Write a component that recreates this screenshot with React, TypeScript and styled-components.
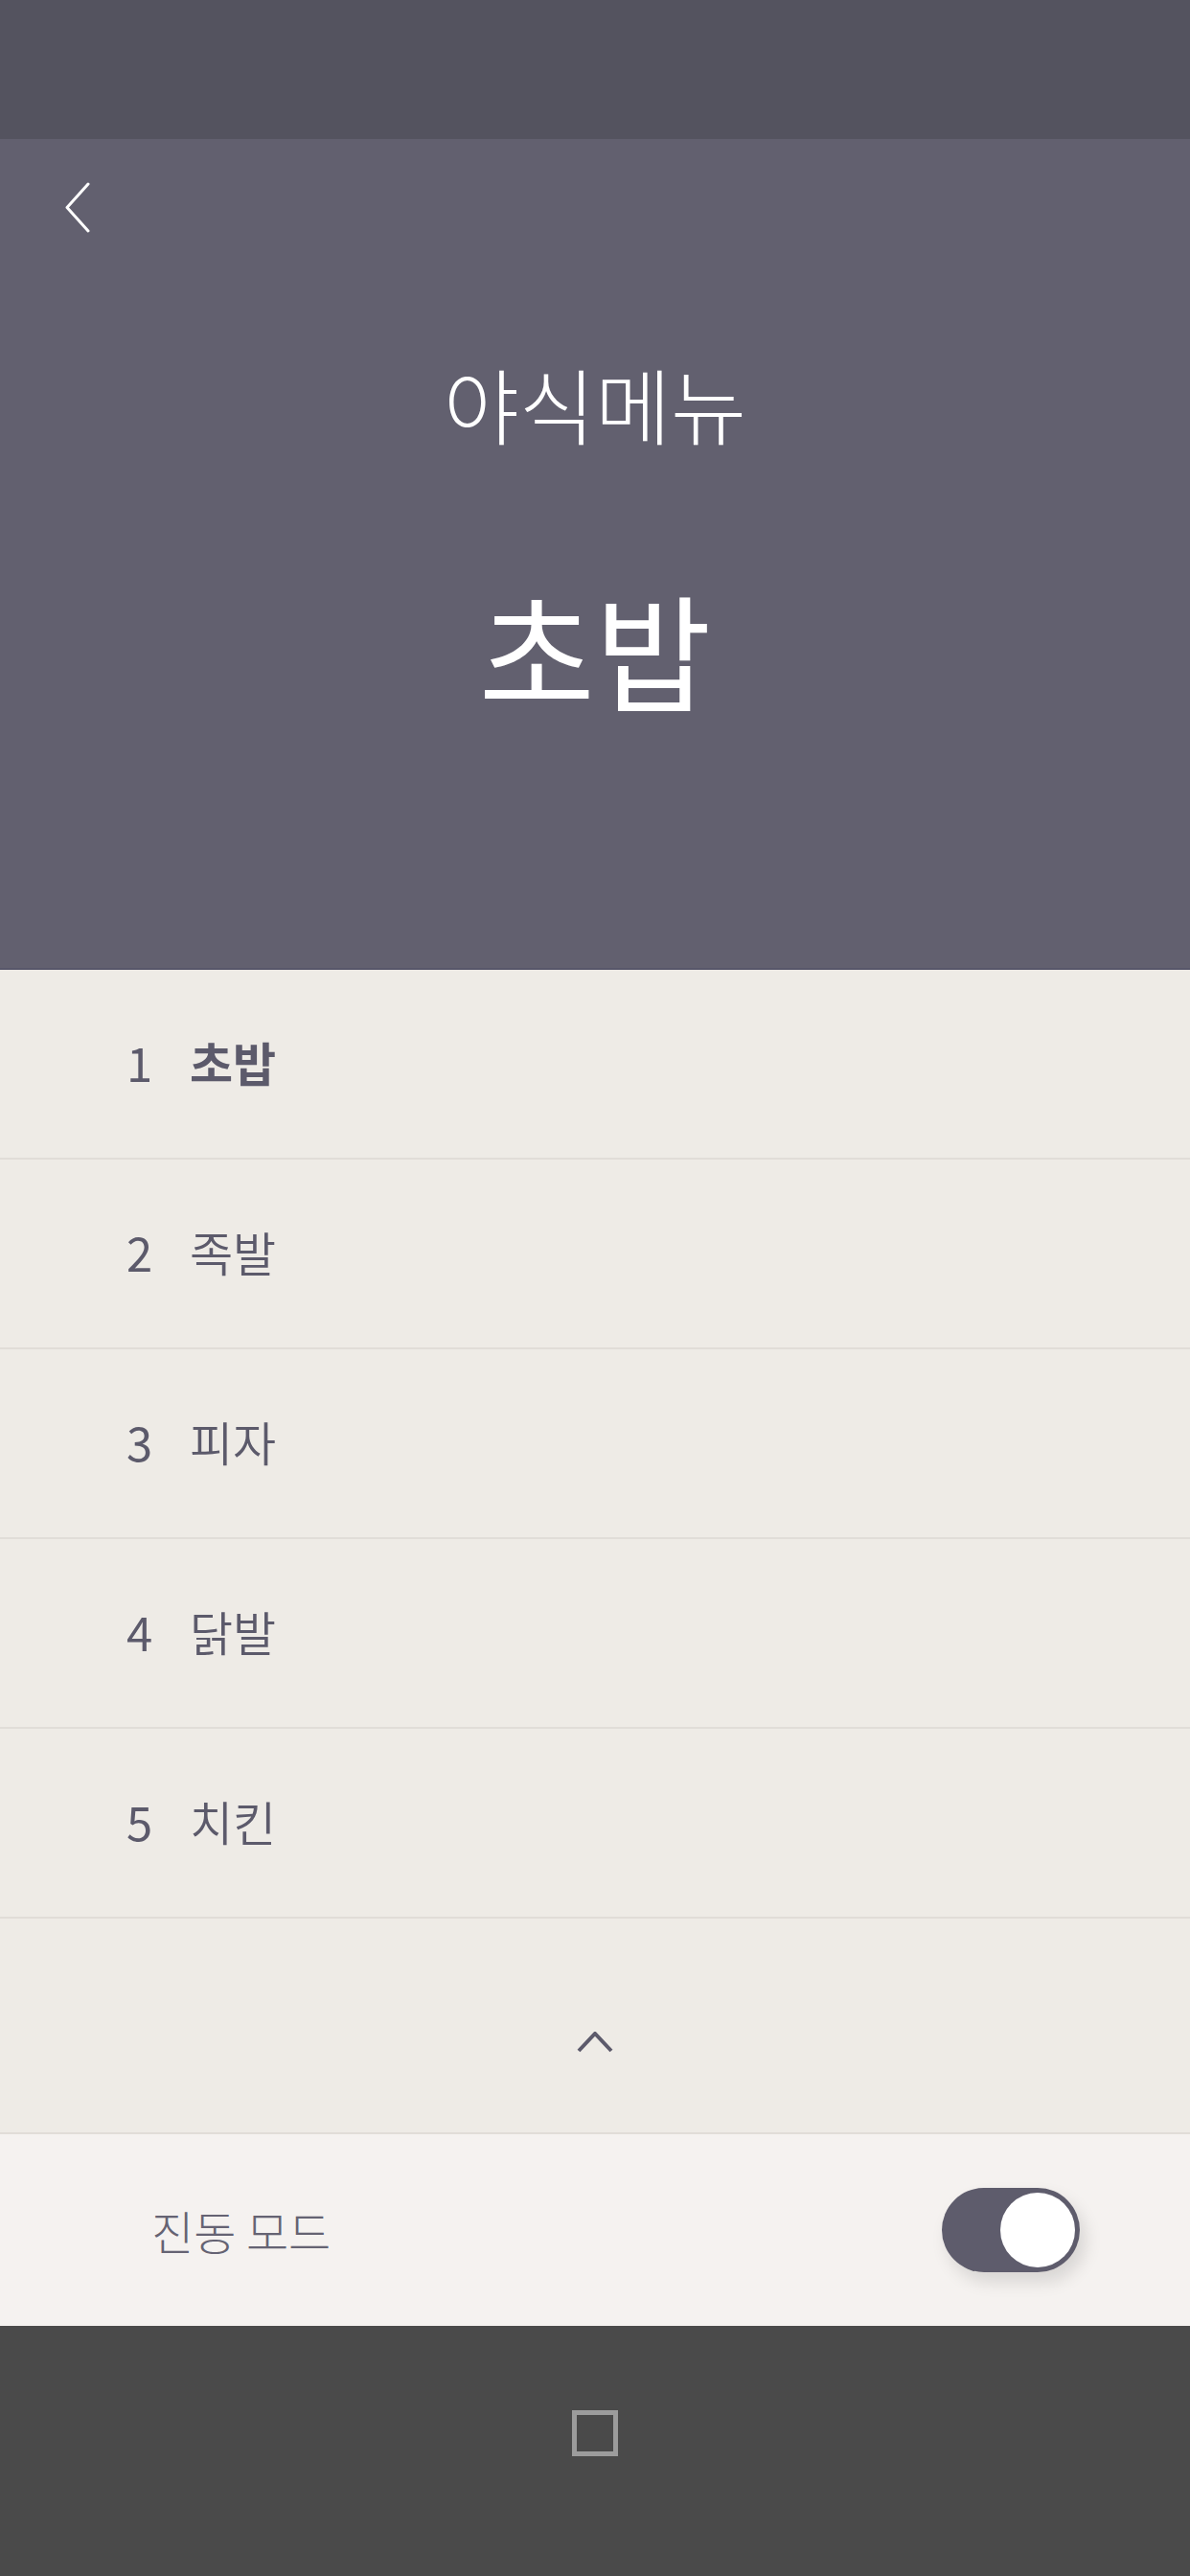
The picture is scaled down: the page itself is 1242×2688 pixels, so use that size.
import React from "react";
import styled, { createGlobalStyle } from "styled-components";

const GlobalStyle = createGlobalStyle`
  html, body {
    margin: 0;
    padding: 0;
    background: #4a4a4a;
  }
  body {
    font-family: "Noto Sans CJK KR", "Noto Sans", sans-serif;
  }
  * { box-sizing: border-box; }
`;

const Screen = styled.div`
  width: 1242px;
  height: 2688px;
  display: flex;
  flex-direction: column;
  overflow: hidden;
`;

const StatusBar = styled.div`
  height: 145px;
  flex-shrink: 0;
  background: #54535f;
`;

const Header = styled.header`
  height: 867px;
  flex-shrink: 0;
  background: #62606f;
  border-bottom: 2px solid #57566a;
  display: flex;
  flex-direction: column;
  align-items: center;
`;

const TopBar = styled.div`
  align-self: stretch;
  height: 144px;
  display: flex;
  align-items: center;
  padding-left: 66px;
`;

const BackButton = styled.button`
  border: none;
  background: none;
  padding: 0;
  display: flex;
  cursor: pointer;
`;

const Subtitle = styled.h2`
  margin: 82px 0 0;
  height: 100px;
  line-height: 100px;
  font-size: 86px;
  font-weight: 300;
  color: #ffffff;
`;

const MainTitle = styled.h1`
  margin: 130px 0 0;
  height: 150px;
  line-height: 150px;
  font-size: 132px;
  font-weight: 400;
  color: #ffffff;
`;

const MenuList = styled.ul`
  list-style: none;
  margin: 0;
  padding: 0;
  background: #eeebe6;
`;

const MenuRow = styled.li<{ $active?: boolean }>`
  height: 198px;
  border-bottom: 2px solid #e1ddd8;
  display: flex;
  align-items: center;
  padding: 0 0 6px 132px;
  color: #5c5a6b;
  font-size: 49px;
  font-weight: ${(p) => (p.$active ? 700 : 350)};
`;

const Rank = styled.span`
  width: 66px;
  font-weight: 400;
`;

const Collapse = styled.div`
  height: 225px;
  flex-shrink: 0;
  background: #eeebe6;
  border-bottom: 2px solid #e1ddd8;
  display: flex;
  align-items: center;
  justify-content: center;
  padding-top: 34px;
`;

const SettingRow = styled.div`
  height: 200px;
  flex-shrink: 0;
  background: #f5f2f0;
  display: flex;
  align-items: center;
  justify-content: space-between;
  padding: 0 115px 0 158px;
`;

const SettingLabel = styled.span`
  font-size: 48px;
  font-weight: 300;
  color: #656373;
`;

const Toggle = styled.div<{ $on: boolean }>`
  width: 144px;
  height: 88px;
  border-radius: 44px;
  background: ${(p) => (p.$on ? "#5e5c6c" : "#cccccc")};
  display: flex;
  align-items: center;
  justify-content: ${(p) => (p.$on ? "flex-end" : "flex-start")};
  padding: 0 5px;
  box-shadow: 6px 10px 18px rgba(0, 0, 0, 0.12);
`;

const Knob = styled.div`
  width: 78px;
  height: 78px;
  border-radius: 50%;
  background: #ffffff;
`;

const NavBar = styled.nav`
  flex: 1;
  background: #4a4a4a;
  display: flex;
  align-items: center;
  justify-content: center;
`;

const HomeSquare = styled.div`
  width: 48px;
  height: 48px;
  border: 5px solid #9c9c9c;
  margin-top: -38px;
`;

const menus = ["초밥", "족발", "피자", "닭발", "치킨"];

export default function App() {
  return (
    <>
      <GlobalStyle />
      <Screen>
        <StatusBar />
        <Header>
          <TopBar>
            <BackButton aria-label="back">
              <svg width="30" height="54" viewBox="0 0 30 54">
                <path
                  d="M26 2 L4 26.5 L26 51"
                  fill="none"
                  stroke="#ffffff"
                  strokeWidth="3"
                  strokeLinecap="round"
                  strokeLinejoin="round"
                />
              </svg>
            </BackButton>
          </TopBar>
          <Subtitle>야식메뉴</Subtitle>
          <MainTitle>초밥</MainTitle>
        </Header>
        <MenuList>
          {menus.map((m, i) => (
            <MenuRow key={m} $active={i === 0}>
              <Rank>{i + 1}</Rank>
              {m}
            </MenuRow>
          ))}
        </MenuList>
        <Collapse>
          <svg width="38" height="22" viewBox="0 0 38 22">
            <path
              d="M2 20 L19 2 L36 20"
              fill="none"
              stroke="#5c5a6b"
              strokeWidth="4"
              strokeLinejoin="miter"
            />
          </svg>
        </Collapse>
        <SettingRow>
          <SettingLabel>진동 모드</SettingLabel>
          <Toggle $on>
            <Knob />
          </Toggle>
        </SettingRow>
        <NavBar>
          <HomeSquare />
        </NavBar>
      </Screen>
    </>
  );
}
